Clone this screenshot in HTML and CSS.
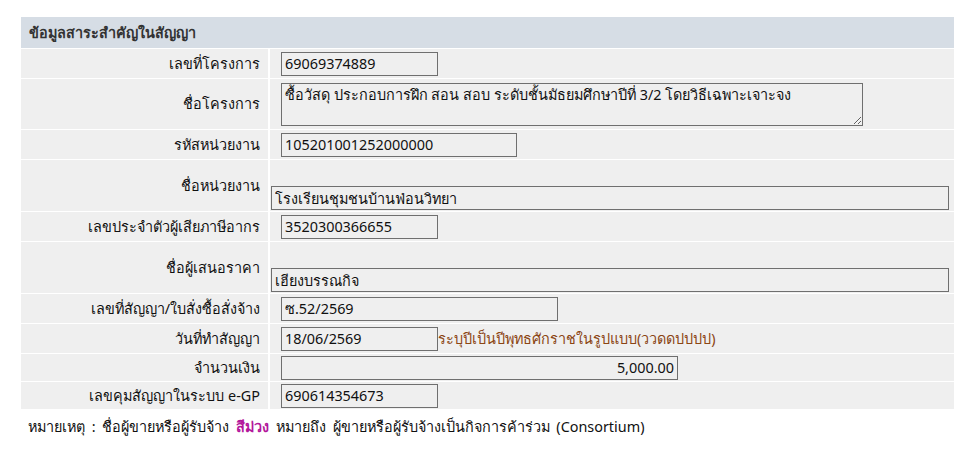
FILE: index.html
```html
<!DOCTYPE html>
<html>
<head>
    <meta charset="utf-8">
    <title>ข้อมูลสาระสำคัญในสัญญา</title>
    <link rel="stylesheet" href="styles.css">
</head>
<body>
    <table class="contract">
        <tr class="head">
            <td colspan="2">ข้อมูลสาระสำคัญในสัญญา</td>
        </tr>
        <tr>
            <th>เลขที่โครงการ</th>
            <td><input class="field short" type="text" value="69069374889" readonly></td>
        </tr>
        <tr class="tall">
            <th>ชื่อโครงการ</th>
            <td><textarea class="field note" readonly>ซื้อวัสดุ ประกอบการฝึก สอน สอบ ระดับชั้นมัธยมศึกษาปีที่ 3/2 โดยวิธีเฉพาะเจาะจง</textarea></td>
        </tr>
        <tr>
            <th>รหัสหน่วยงาน</th>
            <td><input class="field mid" type="text" value="105201001252000000" readonly></td>
        </tr>
        <tr class="tall">
            <th>ชื่อหน่วยงาน</th>
            <td class="bottom"><input class="field full" type="text" value="โรงเรียนชุมชนบ้านฟ่อนวิทยา" readonly></td>
        </tr>
        <tr>
            <th>เลขประจำตัวผู้เสียภาษีอากร</th>
            <td><input class="field short" type="text" value="3520300366655" readonly></td>
        </tr>
        <tr class="tall">
            <th>ชื่อผู้เสนอราคา</th>
            <td class="bottom"><input class="field full" type="text" value="เฮียงบรรณกิจ" readonly></td>
        </tr>
        <tr>
            <th>เลขที่สัญญา/ใบสั่งซื้อสั่งจ้าง</th>
            <td><input class="field mid2" type="text" value="ซ.52/2569" readonly></td>
        </tr>
        <tr>
            <th>วันที่ทำสัญญา</th>
            <td><input class="field short" type="text" value="18/06/2569" readonly><span class="hint">ระบุปีเป็นปีพุทธศักราชในรูปแบบ(ววดดปปปป)</span></td>
        </tr>
        <tr class="low">
            <th>จำนวนเงิน</th>
            <td><input class="field money" type="text" value="5,000.00" readonly></td>
        </tr>
        <tr class="low">
            <th>เลขคุมสัญญาในระบบ e-GP</th>
            <td><input class="field short" type="text" value="690614354673" readonly></td>
        </tr>
    </table>
    <p class="remark">หมายเหตุ : ชื่อผู้ขายหรือผู้รับจ้าง <b class="purple">สีม่วง</b> หมายถึง ผู้ขายหรือผู้รับจ้างเป็นกิจการค้าร่วม (Consortium)</p>
</body>
</html>
```

FILE: styles.css
```css
body {
    margin: 0;
    background: white;
    font-family: Tahoma, "Noto Sans", "DejaVu Sans", sans-serif;
    font-size: 14.4px;
    color: #111;
}

.contract {
    margin: 16px 0 0 19px;
    width: 937px;
    border-spacing: 2px 1px;
}

.contract td,
.contract th {
    background: #efefef;
    padding: 0;
    height: 29px;
    line-height: 18px;
}

.contract .head td {
    background: #d6dde5;
    height: 31px;
    padding-left: 8px;
    font-weight: bold;
    color: #333;
}

.contract th {
    width: 239px;
    text-align: right;
    font-weight: normal;
    padding-right: 8px;
}

.contract td {
    padding-left: 1px;
}

.contract .tall th,
.contract .tall td {
    height: 50px;
}

.contract .low th,
.contract .low td {
    height: 27px;
}

.contract td.bottom {
    vertical-align: bottom;
    padding-bottom: 1px;
}

.field {
    box-sizing: border-box;
    height: 24px;
    margin: 0 0 0 10px;
    padding: 0 3px;
    border: 1px solid #6f6f6f;
    background: transparent;
    font: inherit;
    color: #111;
    vertical-align: middle;
}

.short { width: 157px; }
.mid { width: 236px; }
.mid2 { width: 277px; }
.money { width: 397px; text-align: right; }

.full {
    width: 678px;
    margin-left: 0;
}

.note {
    display: block;
    width: 582px;
    height: 43px;
    padding: 2px 3px;
    resize: both;
    overflow: hidden;
}

.hint {
    color: #8b4513;
    vertical-align: middle;
}

.remark {
    margin: 5px 0 0 28px;
    word-spacing: 3px;
}

.purple {
    color: #b3179c;
}
```
